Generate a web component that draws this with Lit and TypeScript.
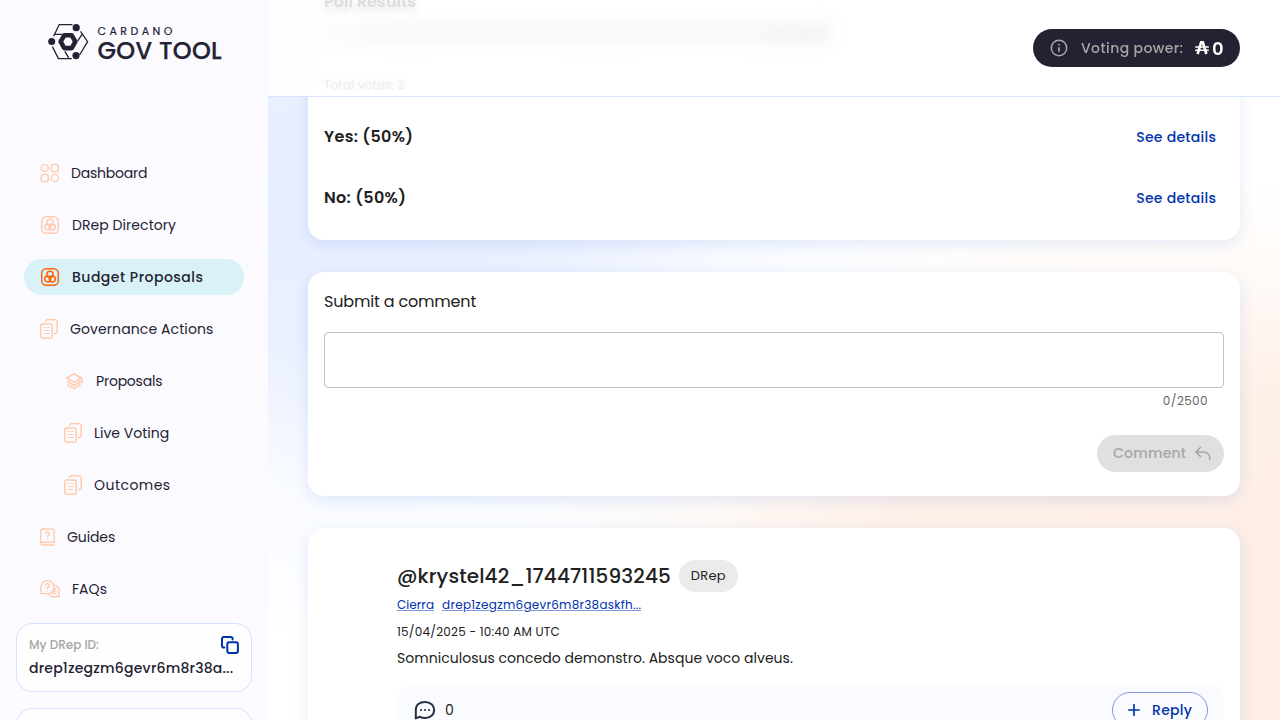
import { LitElement, html, css, svg } from "lit";
import { customElement } from "lit/decorators.js";
import { classMap } from "lit/directives/class-map.js";

const dashboardIcon = html`<svg width="19" height="20" viewBox="0 0 19 20" fill="none" stroke="currentColor" stroke-width="1.4">
  <circle cx="4.7" cy="5" r="3.6" /><rect x="11.2" y="1.4" width="7.2" height="7.2" rx="2.4" />
  <rect x="1.1" y="11.4" width="7.2" height="7.2" rx="2.4" /><circle cx="14.8" cy="15" r="3.6" />
</svg>`;

const drepIcon = html`<svg width="20" height="20" viewBox="0 0 20 20" fill="none" stroke="currentColor" stroke-width="1.5">
  <rect x="1.7" y="1.7" width="16.6" height="16.6" rx="4.6" />
  <circle cx="10" cy="7.4" r="3.1" /><circle cx="7.7" cy="11.9" r="3" /><circle cx="12.3" cy="11.9" r="3" />
</svg>`;

const docsIcon = html`<svg width="18" height="20" viewBox="0 0 18 20" fill="none" stroke="currentColor" stroke-width="1.5" stroke-linecap="round">
  <rect x=".8" y="4.9" width="11.4" height="14.3" rx="2" />
  <path d="M5.9 2.6V2.3A1.6 1.6 0 0 1 7.5.8h8A1.8 1.8 0 0 1 17.2 2.5v10.2a1.8 1.8 0 0 1-1.8 1.8h-.7" />
  <path d="M4 8.5h1.1M7.6 8.5h1.6M4 11.5h5.2M4 14.5h5.2" stroke-width="1.2" />
</svg>`;

const layersIcon = html`<svg width="20" height="20" viewBox="0 0 20 20" fill="none" stroke="currentColor" stroke-width="1.6" stroke-linejoin="round" stroke-linecap="round">
  <path d="M10 2.9 17.4 7 10 11.1 2.6 7Z" />
  <path d="M4.2 10.2v1L10 14.5l5.8-3.3v-1M4.2 13.4v1.2L10 17.4l5.8-2.8v-1.2M17.8 7.2v4.2" />
</svg>`;

const guideIcon = html`<svg width="15" height="18" viewBox="0 0 15 18" fill="none" stroke="currentColor" stroke-width="1.4" stroke-linecap="round">
  <path d="M.8 15V3A2 2 0 0 1 2.8 1h9.4a2 2 0 0 1 2 2v11.2H2.3a1.3 1.3 0 0 0 0 2.8h11.9" />
  <path d="M5.7 5.8a1.9 1.8 0 1 1 2.8 1.6c-.7.4-.9.8-.9 1.6M7.6 11.2v.1" />
</svg>`;

const faqIcon = html`<svg width="20" height="20" viewBox="0 0 20 20" fill="none" stroke="currentColor" stroke-width="1.4" stroke-linecap="round" stroke-linejoin="round">
  <path d="M.9 14.4V8a6.5 6.5 0 1 1 6.5 6.6H1.1Z" />
  <path d="M13.9 6.3a5.6 5.6 0 0 1 4.9 8l.4 3.3-2.6-.3a5.8 5.8 0 0 1-8-2.6" />
  <path d="M5.6 6.3a1.8 1.8 0 1 1 2.7 1.6c-.7.4-.9.8-.9 1.5M7.4 11.6v.1M14 9.8h1.4M13.4 12h2.8M12 14.2h4" />
</svg>`;

const logo = html`<svg class="mark" width="41" height="36" viewBox="0 0 41 36" fill="none" stroke="currentColor" stroke-width="1.3">
  <path d="M5.6 12.2 11.2.7H24.5M32.5 7.4 39.6 17.7 31.6 31M4.4 22.6 10.4 34.6H23.8M6.4 10.3H14.2M34.2 10.2 29.8 16.8M16.8 27.3 20.8 33.8" />
  <g fill="currentColor" stroke="none"><circle cx="28.2" cy="3.7" r="3.6" /><circle cx="3.7" cy="17.6" r="3.5" /><circle cx="28" cy="31.6" r="3.6" /></g>
  <path d="M16.3 11.3h7.4l3.7 6.4-3.7 6.4h-7.4l-3.7-6.4Z" stroke-width="4.6" stroke-linejoin="round" />
</svg>`;

const copyIcon = svg`<svg width="18" height="18" viewBox="0 0 18 18" fill="none" stroke="#0033ad" stroke-width="2" stroke-linejoin="round" stroke-linecap="round">
  <rect x="6.3" y="6.3" width="10.6" height="10.6" rx="1.8" />
  <path d="M3.4 11.6H2.8A1.8 1.8 0 0 1 1 9.8V2.8A1.8 1.8 0 0 1 2.8 1h7a1.8 1.8 0 0 1 1.8 1.8v.6" />
</svg>`;

interface NavItem { label: string; icon: unknown; spacing: number; nested?: boolean; active?: boolean }

const NAV: NavItem[] = [
  { label: "Dashboard", icon: dashboardIcon, spacing: -0.22 },
  { label: "DRep Directory", icon: drepIcon, spacing: 0.06 },
  { label: "Budget Proposals", icon: drepIcon, spacing: 0.49, active: true },
  { label: "Governance Actions", icon: docsIcon, spacing: 0.1 },
  { label: "Proposals", icon: layersIcon, spacing: -0.22, nested: true },
  { label: "Live Voting", icon: docsIcon, spacing: 0, nested: true },
  { label: "Outcomes", icon: docsIcon, spacing: 0.46, nested: true },
  { label: "Guides", icon: guideIcon, spacing: -0.1 },
  { label: "FAQs", icon: faqIcon, spacing: 0.06 },
];

@customElement("side-bar")
export class SideBar extends LitElement {
  static styles = css`
    :host { display: flex; flex-direction: column; box-sizing: border-box; width: 268px; height: 720px; overflow: hidden; background: #fbfaff; color: #242232; padding: 24px 16px 0; }
    svg { display: block; flex: none; }
    .logo { display: flex; gap: 8.5px; height: 36px; padding-left: 32px; }
    .words { display: flex; flex-direction: column; white-space: nowrap; }
    .top { font-size: 11px; line-height: 15px; letter-spacing: 3.45px; -webkit-text-stroke: .2px; }
    .bottom { font-size: 24px; line-height: 24px; font-weight: 500; letter-spacing: .3px; -webkit-text-stroke: .25px; }
    nav { display: flex; flex-direction: column; gap: 16px; padding: 0 8px; margin-top: 95px; }
    .item { display: flex; align-items: center; gap: 12px; height: 36px; padding-left: 16px; border-radius: 18px; color: #ffcbad; }
    .item.nested { padding-left: 40px; }
    .item.active { background: #d8f2f7; color: #ff640a; }
    .label { color: #242232; font-size: 14px; line-height: 20px; white-space: nowrap; }
    .active .label { font-weight: 500; }
    .box { flex: none; box-sizing: border-box; height: 69px; border: 1px solid #d6e2ff; border-radius: 16px; background: rgba(255,255,255,.7); padding: 12px; margin-top: 16px; }
    .row { display: flex; align-items: center; justify-content: space-between; height: 18px; }
    .cap { font-size: 12px; font-weight: 500; color: #a6a6a6; }
    .id { font-size: 14px; line-height: 20px; font-weight: 500; letter-spacing: .21px; margin-top: 4px; white-space: nowrap; }
  `;
  render() {
    return html`
      <div class="logo">${logo}<div class="words"><span class="top">CARDANO</span><span class="bottom">GOV TOOL</span></div></div>
      <nav>${NAV.map((n) => html`<div class=${classMap({ item: true, nested: !!n.nested, active: !!n.active })}>${n.icon}<span class="label" style="letter-spacing:${n.spacing}px">${n.label}</span></div>`)}</nav>
      <div class="box"><div class="row"><span class="cap">My DRep ID:</span>${copyIcon}</div><div class="id">drep1zegzm6gevr6m8r38a...</div></div>
      <div class="box"></div>`;
  }
}

@customElement("app-root")
export class AppRoot extends LitElement {
  static styles = css`
    :host { display: flex; width: 1280px; height: 720px; overflow: hidden; font-family: Poppins, Inter, sans-serif; color: #212121; }
    svg { display: block; flex: none; }
    .page { position: relative; flex: 1; box-sizing: border-box; height: 720px; overflow: hidden; padding: 0 40px;
      background:
        radial-gradient(ellipse 640px 440px at 6% 27%, #e7eeff 0%, #eaf0ff 35%, rgba(243,247,255,.6) 65%, rgba(255,255,255,0) 100%),
        radial-gradient(ellipse 800px 440px at 100% 86%, #feeee6 0%, #feefe7 50%, rgba(255,246,240,.6) 76%, rgba(255,255,255,0) 100%),
        #fff; }
    .card { box-sizing: border-box; background: #fff; border-radius: 16px; padding: 0 16px; box-shadow: 0 4px 15px rgba(47,98,220,.13); margin-bottom: 32px; }
    .results { height: 240px; border-radius: 0 0 16px 16px; padding-top: 107px; }
    .line { display: flex; align-items: center; justify-content: space-between; height: 61px; padding-right: 8px; }
    .answer { font-size: 16px; font-weight: 600; letter-spacing: .31px; padding-bottom: 2px; }
    .link { font-size: 14px; font-weight: 500; letter-spacing: .28px; margin-right: -.3px; color: #0033ad; }
    header { position: absolute; inset: 0 0 auto 0; box-sizing: border-box; height: 97px; border-bottom: 1px solid #d6e2ff; display: flex; align-items: flex-start; justify-content: space-between; padding: 0 40px 0 56px; background: rgba(255,255,255,.84); backdrop-filter: blur(10px); overflow: hidden; }
    .ghost { display: flex; flex-direction: column; white-space: nowrap; margin-top: -9px; }
    .gtitle { font-size: 16px; line-height: 22px; font-weight: 600; letter-spacing: .05px; color: #dcdcdc; text-shadow: 0 4px 10px rgba(0,0,0,.14); }
    .smear { width: 506px; height: 18px; margin-top: 11px; background: linear-gradient(90deg, #fbfbfb, #f4f4f4 16%, #f7f7f7 25%, #f5f5f5 55%, #f7f7f7 80%, #f1f1f1 95%); filter: blur(9px); }
    .gvotes { font-size: 12px; line-height: 18px; letter-spacing: .16px; color: #ededed; margin-top: 34px; text-shadow: 0 0 8px rgba(0,0,0,.12); }
    .power { display: flex; align-items: center; box-sizing: border-box; width: 207px; height: 38px; margin-top: 29px; border-radius: 19px; background: #242232; padding-left: 16px; white-space: nowrap; }
    .plabel { font-size: 14px; font-weight: 500; letter-spacing: .4px; color: #a6a6a6; margin-left: 12px; width: 103px; }
    .amount { display: flex; align-items: center; gap: 3px; margin-left: 11px; color: #fff; font-size: 18px; font-weight: 600; }
    .comment { height: 224px; padding-top: 18px; display: flex; flex-direction: column; }
    .heading { font-size: 16px; line-height: 24px; letter-spacing: -.18px; }
    .input { box-sizing: border-box; height: 56px; margin-top: 18px; border: 1px solid #c1c1c1; border-radius: 4px; }
    .count { align-self: flex-end; margin: 3px 16px 0; font-size: 12px; line-height: 20px; letter-spacing: .4px; color: #666; }
    .submit { align-self: flex-end; display: flex; align-items: center; box-sizing: border-box; width: 127px; height: 37px; margin-top: 24px; border-radius: 19px; background: #e0e0e0; color: #a6a6a6; padding-left: 16px; gap: 9px; font-size: 14px; font-weight: 500; letter-spacing: .2px; }
    .thread { height: 300px; padding: 32px 16px 0 89px; margin-bottom: 0; }
    .who { display: flex; align-items: center; gap: 8px; height: 32px; }
    .name { font-size: 20px; font-weight: 500; letter-spacing: .12px; }
    .chip { display: flex; align-items: center; justify-content: center; width: 59px; height: 32px; border-radius: 16px; background: #ebebeb; font-size: 13px; letter-spacing: .3px; }
    .refs { display: flex; gap: 8px; font-size: 12px; line-height: 18px; margin-top: 4px; color: #0033ad; }
    .refs span { text-decoration: underline; text-decoration-color: rgba(0,51,173,.5); text-decoration-thickness: 1px; text-underline-offset: 1px; letter-spacing: .06px; }
    .refs .drep { letter-spacing: .26px; }
    .date { font-size: 12px; line-height: 20px; margin-top: 8px; letter-spacing: .22px; }
    .body { font-size: 14px; line-height: 24px; margin-top: 4px; letter-spacing: .03px; }
    .actions { display: flex; align-items: flex-start; justify-content: space-between; height: 80px; margin-top: 14px; border-radius: 16px; background: #fafbff; padding: 8px 16px 0 16px; }
    .replies { display: flex; align-items: center; gap: 8px; height: 36px; font-size: 14px; }
    .reply { display: flex; align-items: center; box-sizing: border-box; width: 96px; height: 36px; border: 1px solid #7f99d6; border-radius: 18px; color: #0033ad; padding-left: 15px; gap: 12px; font-size: 14px; font-weight: 500; letter-spacing: .29px; }
  `;
  render() {
    return html`
      <side-bar></side-bar>
      <main class="page">
        <section class="card results">
          <div class="line"><span class="answer">Yes: (50%)</span><span class="link">See details</span></div>
          <div class="line"><span class="answer">No: (50%)</span><span class="link">See details</span></div>
        </section>
        <section class="card comment">
          <div class="heading">Submit a comment</div>
          <div class="input"></div>
          <div class="count">0/2500</div>
          <div class="submit">Comment
            <svg width="16" height="16" viewBox="0 0 16 16" fill="none" stroke="currentColor" stroke-width="1.5" stroke-linecap="round" stroke-linejoin="round"><path d="M5.6 1.2.9 5.9l4.7 4.7M1.2 5.9h7.3a6.2 6.2 0 0 1 6.3 6.3v1.6" /></svg>
          </div>
        </section>
        <section class="card thread">
          <div class="who"><span class="name">@krystel42_1744711593245</span><span class="chip">DRep</span></div>
          <div class="refs"><span>Cierra</span><span class="drep">drep1zegzm6gevr6m8r38askfh...</span></div>
          <div class="date">15/04/2025 - 10:40 AM UTC</div>
          <div class="body">Somniculosus concedo demonstro. Absque voco alveus.</div>
          <div class="actions">
            <div class="replies">
              <svg width="24" height="24" viewBox="0 0 24 24" fill="none" stroke="#242f45" stroke-width="2" stroke-linejoin="round"><path d="M2.8 20.4V12C2.8 7 6.6 3.9 12 3.9S21.2 7.4 21.2 12s-3.7 7.9-9.2 7.9c-1.9 0-3.7-.4-5.1-1.1Z" /><path d="M8 12h.1M12 12h.1M16 12h.1" stroke-linecap="round" /></svg>
              <span>0</span>
            </div>
            <div class="reply">
              <svg width="12" height="12" viewBox="0 0 12 12" stroke="currentColor" stroke-width="1.7" stroke-linecap="round"><path d="M6 .8v10.4M.8 6h10.4" /></svg>
              Reply
            </div>
          </div>
        </section>
        <header>
          <div class="ghost"><span class="gtitle">Poll Results</span><div class="smear"></div><span class="gvotes">Total votes: 2</span></div>
          <div class="power">
            <svg width="20" height="20" viewBox="0 0 20 20" fill="none" stroke="#a6a6a6" stroke-width="1.5"><circle cx="10" cy="10" r="7.7" /><path d="M10 9.2v4.6M10 6v1.6" stroke-width="1.7" /></svg>
            <span class="plabel">Voting power:</span>
            <span class="amount"><svg width="14" height="14" viewBox="0 0 14 14" fill="none" stroke="#fff"><path d="M2.6 13 6.2 1.2h1.6L11.4 13" stroke-width="2.6" /><path d="M.2 6h13.6M.2 9.2h13.6" stroke-width="1.5" /></svg>0</span>
          </div>
        </header>
      </main>`;
  }
}
